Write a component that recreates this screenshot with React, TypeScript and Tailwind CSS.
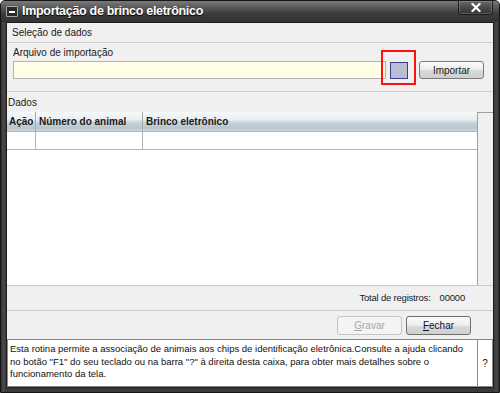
export default function App() {
  const font = { fontFamily: '"Liberation Sans", Arial, sans-serif' }
  return (
    <div className="h-[393px] w-[500px] bg-white" style={font}>
      <div className="flex h-[393px] w-[500px] flex-col overflow-hidden rounded-t-[5px] border border-[#151515] bg-[linear-gradient(90deg,#2c2c2c_0px,#4a4a4a_2px,#3a3a3a_5px,#3a3a3a_calc(100%-5px),#4a4a4a_calc(100%-2px),#2c2c2c_100%)]">
        {/* Title bar */}
        <div className="relative flex h-[21px] shrink-0 items-center bg-[linear-gradient(180deg,#7a7a7a_0%,#555_35%,#3c3c3c_60%,#333_100%)]">
          <div className="ml-[5px] flex h-[11px] w-[12px] items-center justify-center rounded-[1px] border border-[#a8a8a8] bg-[#2a2a2a]">
            <div className="h-[2px] w-[6px] bg-white" />
          </div>
          <span className="ml-[4px] text-[12.5px] font-bold tracking-[-0.3px] text-white [text-shadow:0_1px_1px_#000]">
            Importação de brinco eletrônico
          </span>
          <div className="absolute right-[6px] top-[-1px] flex h-[15px] w-[35px] items-center justify-center rounded-b-[3px] border border-[#1c1c1c] bg-[linear-gradient(180deg,#6a6a6a_0%,#4a4a4a_50%,#333_100%)] shadow-[inset_0_0_0_1px_rgba(255,255,255,0.18)]">
            <svg width="10" height="9" viewBox="0 0 10 9">
              <path d="M1.5 1 L8.5 8 M8.5 1 L1.5 8" stroke="white" strokeWidth="2.2" strokeLinecap="square" />
            </svg>
          </div>
        </div>

        {/* Body */}
        <div className="mx-[5px] mb-[4px] flex flex-1 flex-col border border-[#1e1e1e] bg-[#f0f0f0] text-[#1a1a1a]">
          {/* Seleção de dados */}
          <div className="flex h-[20px] shrink-0 items-center border-b border-[#cfcfcf] pl-[5px] text-[10px]">
            Seleção de dados
          </div>
          <div className="flex h-[49px] shrink-0 flex-col border-b border-[#cfcfcf] pl-[6px] pr-[9px]">
            <div className="mt-[3px] h-[13px] text-[10px] leading-[13px]">Arquivo de importação</div>
            <div className="relative mt-[2px] flex items-center">
              <div className="h-[18px] flex-1 border border-[#b4b4b4] bg-[#fffde4]" />
              <div className="ml-[4px] h-[17px] w-[18px] border border-[#3a3f8a] bg-[#b9bdd6]" />
              <button className="ml-[11px] flex h-[18px] w-[65px] items-center justify-center rounded-[3px] border border-[#7a7a7a] bg-[linear-gradient(180deg,#fbfbfb_0%,#ececec_50%,#d9d9d9_51%,#cfcfcf_100%)] text-[10px] text-[#1a1a1a]">
                Importar
              </button>
              <div className="pointer-events-none absolute right-[68px] top-[-11px] h-[35px] w-[35px] border-2 border-[#ff1010]" />
            </div>
          </div>

          {/* Dados */}
          <div className="flex h-[20px] shrink-0 items-center pl-[1px] text-[10px]">Dados</div>
          <div className="flex h-[173px] shrink-0">
            <div className="flex flex-1 flex-col bg-white">
              <div className="flex h-[20px] shrink-0 border-b border-[#b4b4b4] bg-[linear-gradient(180deg,#f6f9fb_0%,#e9eef1_40%,#c9d3d9_55%,#b9c5cd_85%,#d3dadf_100%)] text-[10px] font-bold">
                <div className="flex w-[29px] items-center border-r border-[#a8a8a8] pl-[2px]">Ação</div>
                <div className="flex w-[107px] items-center border-r border-[#a8a8a8] pl-[3px]">Número do animal</div>
                <div className="flex flex-1 items-center pl-[3px]">Brinco eletrônico</div>
              </div>
              <div className="flex h-[18px] shrink-0 border-b border-[#b4b4b4]">
                <div className="w-[29px] border-r border-[#b4b4b4]" />
                <div className="w-[107px] border-r border-[#b4b4b4]" />
                <div className="flex-1" />
              </div>
              <div className="flex-1" />
            </div>
            <div className="w-[16px] border-l border-t border-[#a0a0a0] bg-[#f0f0f0]" />
          </div>

          {/* Total */}
          <div className="flex h-[26px] shrink-0 items-center justify-end border-y border-[#cacaca] pr-[28px] text-[9.5px] tracking-[-0.2px]">
            <span>Total de registros:</span>
            <span className="ml-[9px]">00000</span>
          </div>

          {/* Buttons */}
          <div className="flex h-[28px] shrink-0 items-center justify-end gap-[4px] pr-[22px]">
            <button className="flex h-[19px] w-[65px] items-center justify-center rounded-[3px] border border-[#c4c4c4] bg-[#f4f4f4] text-[10px] text-[#a6a6a6]">
              <span><span className="underline">G</span>ravar</span>
            </button>
            <button className="flex h-[19px] w-[65px] items-center justify-center rounded-[3px] border border-[#6f6f6f] bg-[linear-gradient(180deg,#fbfbfb_0%,#ededed_50%,#dadada_51%,#d0d0d0_100%)] text-[10px] text-[#111]">
              <span><span className="underline">F</span>echar</span>
            </button>
          </div>

          {/* Help */}
          <div className="flex flex-1 border border-[#8a8a8a] bg-white">
            <div className="flex-1 whitespace-nowrap pl-[2px] pt-[3px] text-[9.5px] leading-[12.5px] text-[#111]">
              Esta rotina permite a associação de animais aos chips de identificação eletrônica.Consulte a ajuda clicando
              <br />
              no botão "F1" do seu teclado ou na barra "?" à direita desta caixa, para obter mais detalhes sobre o
              <br />
              funcionamento da tela.
            </div>
            <div className="flex w-[15px] items-center justify-center border-l border-[#8a8a8a] text-[10px] text-[#222222]">?</div>
          </div>
        </div>
      </div>
    </div>
  )
}
